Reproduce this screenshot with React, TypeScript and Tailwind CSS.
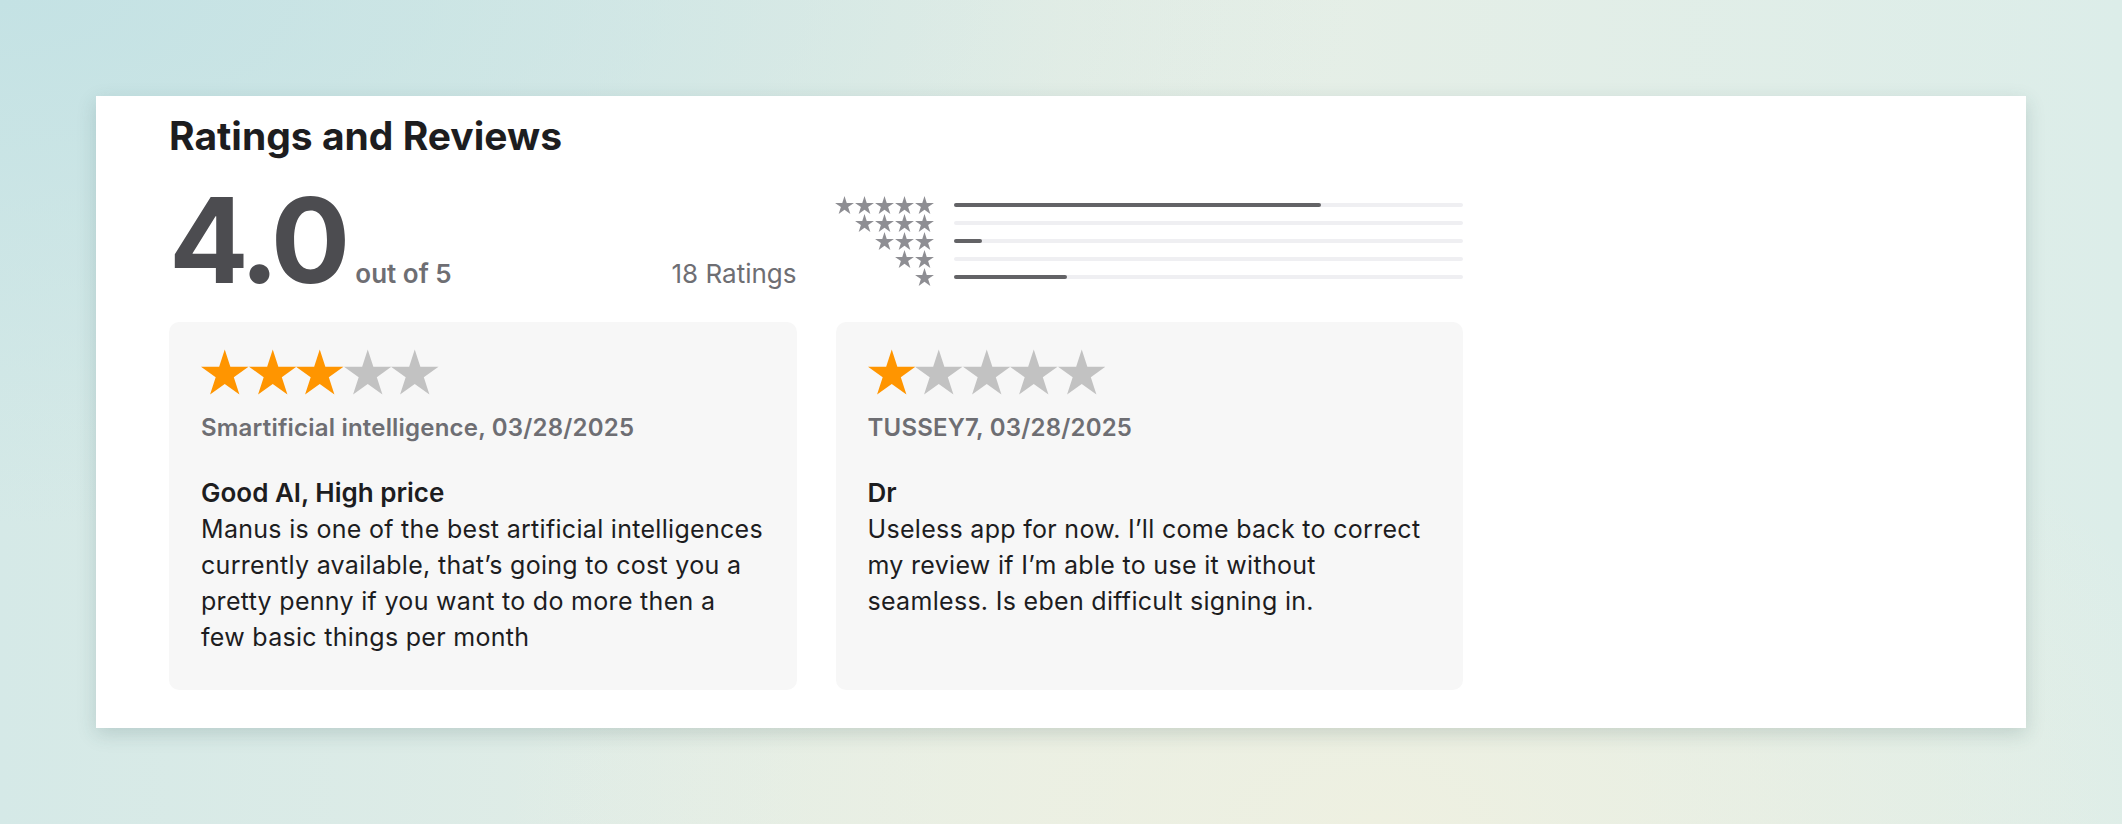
import React from "react";

const STAR = "50,0 61.8,36.33 100,36.33 69.1,58.77 80.9,95.1 50,72.65 19.1,95.1 30.9,58.77 0,36.33 38.2,36.33";

const Star = ({ className }: { className: string }) => (
  <svg viewBox="0 0 100 95.1" className={className} aria-hidden="true">
    <polygon points={STAR} fill="currentColor" />
  </svg>
);

const histogram = [
  { stars: 5, count: 13 },
  { stars: 4, count: 0 },
  { stars: 3, count: 1 },
  { stars: 2, count: 0 },
  { stars: 1, count: 4 },
];
const total = 18;

const reviews = [
  {
    rating: 3,
    author: "Smartificial intelligence, 03/28/2025",
    title: "Good AI, High price",
    lines: [
      "Manus is one of the best artificial intelligences",
      "currently available, that’s going to cost you a",
      "pretty penny if you want to do more then a",
      "few basic things per month",
    ],
  },
  {
    rating: 1,
    author: "TUSSEY7, 03/28/2025",
    title: "Dr",
    lines: [
      "Useless app for now. I’ll come back to correct",
      "my review if I’m able to use it without",
      "seamless. Is eben difficult signing in.",
    ],
  },
];

const ReviewCard = ({ review }: { review: (typeof reviews)[number] }) => (
  <div className="h-[368px] rounded-[10px] bg-[#f7f7f7] pl-[32px] pt-[27px]">
    <div className="flex">
      {[1, 2, 3, 4, 5].map((i) => (
        <Star
          key={i}
          className={`h-[46px] w-[47.5px] ${i <= review.rating ? "text-[#ff9500]" : "text-[#c2c2c2]"}`}
        />
      ))}
    </div>
    <div className="mt-[15px] text-[24px] font-semibold leading-[36px] tracking-[0.2px] text-[#6e6e73]">
      {review.author}
    </div>
    <div className="mt-[29px] text-[26px] font-semibold leading-[36px] text-[#1d1d1f]">{review.title}</div>
    <p className="whitespace-nowrap text-[25px] leading-[36px] tracking-[0.3px] text-[#1d1d1f]">
      {review.lines.map((line, i) => (
        <React.Fragment key={i}>
          {line}
          {i < review.lines.length - 1 && <br />}
        </React.Fragment>
      ))}
    </p>
  </div>
);

export default function App() {
  return (
    <div className="min-h-[824px] w-full bg-[radial-gradient(ellipse_at_top_left,#c4e2e4_0%,transparent_45%),radial-gradient(ellipse_at_65%_100%,#eef0e1_0%,transparent_45%),linear-gradient(90deg,#d5e9e7,#e8efe6_50%,#dcede9)] pl-[96px] pt-[96px] font-['Inter','Liberation_Sans',sans-serif]">
      <div className="h-[632px] w-[1930px] bg-white pl-[73px] pt-[17px] shadow-[0_6px_18px_rgba(40,80,80,0.18)]">
        <div className="w-[1294px]">
          <h2 className="text-[39px] font-bold leading-[46px] text-[#1d1d1f]">Ratings and Reviews</h2>

          <div className="mt-[22px] grid grid-cols-2 gap-x-[39px]">
            <div className="flex items-baseline">
              <span className="text-[118px] font-bold leading-[118px] tracking-[-5px] text-[#4c4c50]">4.0</span>
              <span className="ml-[10px] text-[26px] font-semibold text-[#6e6e73]">out of 5</span>
              <span className="ml-auto text-[26px] text-[#6e6e73]">18 Ratings</span>
            </div>

            <div className="mt-[15px] flex">
              <div className="flex w-[98px] flex-col items-end">
                {histogram.map((row) => (
                  <div key={row.stars} className="flex h-[18px] items-center gap-[1px]">
                    {Array.from({ length: row.stars }).map((_, i) => (
                      <Star key={i} className="h-[18px] w-[19px] text-[#8e8e93]" />
                    ))}
                  </div>
                ))}
              </div>
              <div className="ml-[20px] flex flex-1 flex-col">
                {histogram.map((row) => (
                  <div key={row.stars} className="flex h-[18px] items-center">
                    <div className="h-[4px] w-full rounded-full bg-[#efeff2]">
                      <div
                        className="h-full rounded-full bg-[#636366]"
                        style={{ width: `${(row.count / total) * 100}%` }}
                      />
                    </div>
                  </div>
                ))}
              </div>
            </div>
          </div>

          <div className="mt-[23px] grid grid-cols-2 gap-x-[39px]">
            {reviews.map((r) => (
              <ReviewCard key={r.author} review={r} />
            ))}
          </div>
        </div>
      </div>
    </div>
  );
}
